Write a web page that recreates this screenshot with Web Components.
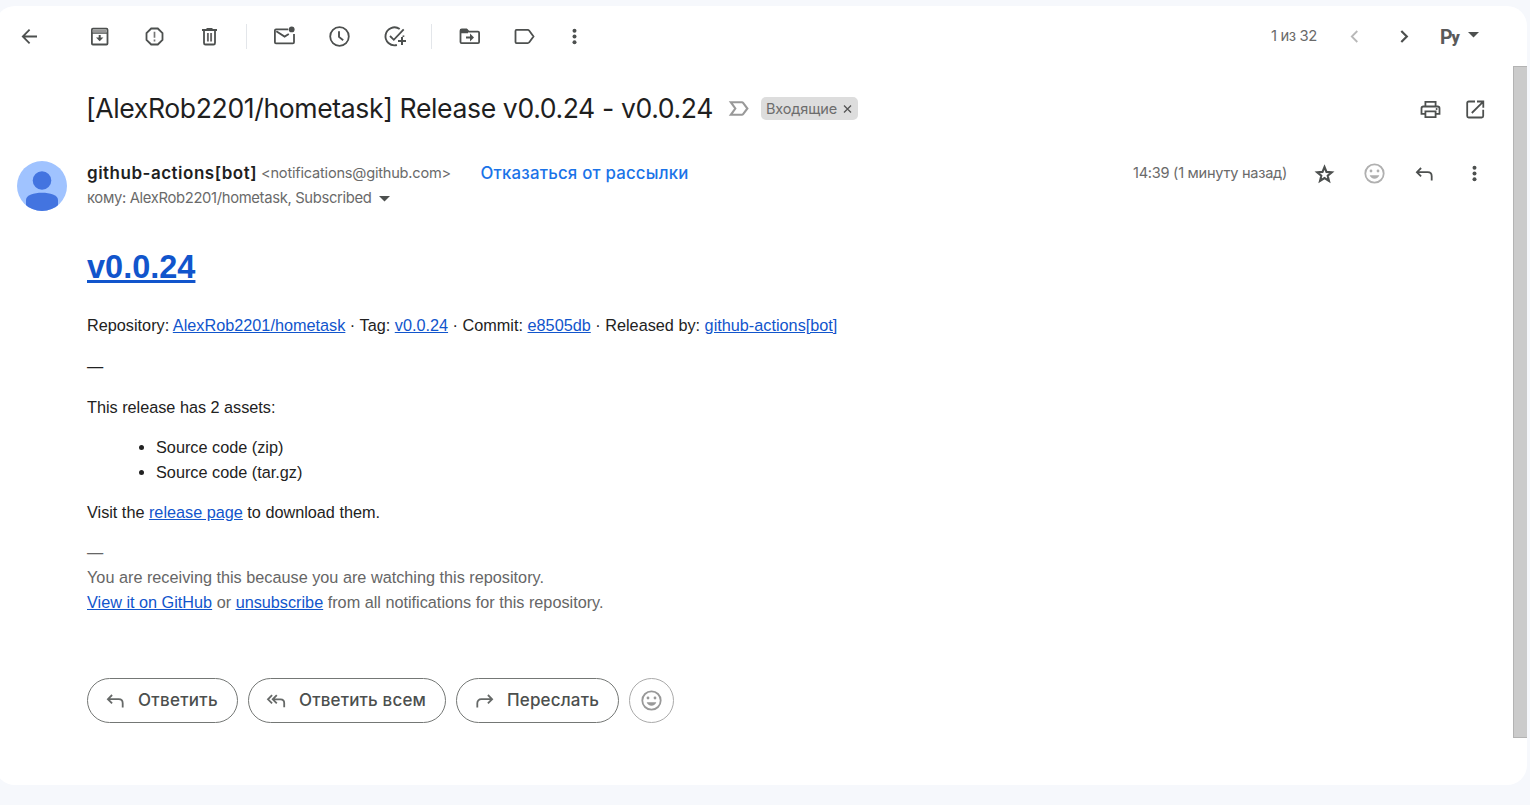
<!DOCTYPE html>
<html lang="ru">
<head>
<meta charset="utf-8">
<title>Release v0.0.24</title>
<style>
html,body{margin:0;height:100%;overflow:hidden;background:#f6f8fc}
body{font-family:Inter,"Open Sans",sans-serif;color:#1f1f1f}
</style>
</head>
<body>
<mail-app></mail-app>
<script>
const define=(name,html,setup)=>{
  const t=document.createElement('template');t.innerHTML=html;
  customElements.define(name,class extends HTMLElement{
    constructor(){super();this.attachShadow({mode:'open'}).append(t.content.cloneNode(true));}
    connectedCallback(){if(setup)setup(this,this.shadowRoot);}
  });
};

/* Line icons on a 25 unit grid */
const smile='<circle cx="12.5" cy="12.5" r="9.2"/><circle cx="9" cy="10" r="1.4" fill="currentColor" stroke="none"/><circle cx="16" cy="10" r="1.4" fill="currentColor" stroke="none"/><path d="M7.7 14.3h9.6c-.8 2.1-2.6 3.4-4.8 3.4s-4-1.300-4.800-3.400z" fill="currentColor" stroke="none"/>';
const ICONS={
back:'<path d="M20 12.500H6M12.600 5.700 5.800 12.500l6.800 6.800"/>',
archive:'<rect x="4.900" y="4.700" width="15.600" height="15.800" rx="1"/><path d="M5.800 7.300h13.800" stroke-width="2.600" stroke="#999"/><path d="M5 9.200h15.400" stroke-width="1.200"/><path d="M12.700 11v3.500" stroke-width="2"/><path d="M9 13.500h7.400l-3.700 3.700z" fill="currentColor" stroke="none"/>',
spam:'<path d="M9.200 4.500h6.600l4.700 4.700v6.600l-4.700 4.700H9.200l-4.700-4.700V9.200z"/><path d="M12.500 7.800v6M12.500 15.500v2" stroke-width="1.700" stroke="#777"/>',
trash:'<path d="M5 6h15M9.500 4.900h6" stroke-width="2"/><path d="M7 6.500v12.400c0 .9.600 1.600 1.500 1.600h8c.900 0 1.500-.7 1.500-1.600V6.500"/><path d="M10.900 9v8.500M14.100 9v8.500" stroke-width="1.900" stroke="#666"/>',
unread:'<path d="M16.300 5.300H4c-.6 0-1.100.5-1.100 1.100v11.900c0 .6.500 1.100 1.100 1.100h16.900c.6 0 1.100-.5 1.100-1.100V10"/><path d="m4.300 7.300 8.300 5.300 4.200-2.600"/><circle cx="19.700" cy="5.400" r="2.900" fill="currentColor" stroke="none"/>',
clock:'<circle cx="12.500" cy="12.500" r="9.300"/><path d="M12 7.200v5.700l4.200 3.300" stroke-width="1.900"/>',
task:'<path d="M17.700 5A9 9 0 1 0 14.900 21M21.300 11.500q.1.500 0 1.300" stroke-width="1.900"/><path d="m8 12 3.800 3.800L21.700 5.300"/><path d="M20 13v8M16 17h8" stroke-width="2"/>',
move:'<path d="M3.500 8V6.800c0-.9.500-1.300 1.300-1.300h4.700l2.200 2.200H21c.600 0 1.100.5 1.100 1.100v9.300c0 .6-.5 1.100-1.100 1.100H4.600c-.6 0-1.100-.5-1.100-1.100z"/><path d="M3.500 7.500h7.500" stroke-width="3.400"/><path d="M9 13.500h5" stroke-width="2"/><path d="M13 9.600l4 3.900-4 3.900z" fill="currentColor" stroke="none"/>',
label:'<path d="M4.500 5.900h11.300c.600 0 1 .2 1.300.7l4.400 5.900-4.400 5.900c-.3.500-.7.700-1.300.7H4.500c-.6 0-1-.4-1-1V6.900c0-.6.400-1 1-1z"/>',
more:'<g fill="currentColor" stroke="none"><circle cx="12.500" cy="6.800" r="2"/><circle cx="12.500" cy="12.500" r="2"/><circle cx="12.500" cy="18.200" r="2"/></g>',
prev:'<path d="m15.300 7-5.500 5.500 5.500 5.500"/>',
next:'<path d="m9.300 7 5.500 5.500-5.500 5.500" stroke-width="2.200"/>',
print:'<path d="M7.500 16.900H3.500V11.400c0-1.100.8-1.900 1.900-1.900h14.200c1.100 0 1.900.8 1.900 1.900v5.500h-4"/><path d="M7.400 9V4.800h10.200V9M7.400 14.300h10.200v5.900H7.400z"/><circle cx="18.600" cy="12" r="1" fill="currentColor" stroke="none"/>',
open:'<path d="M12 4.500H5.700c-.9 0-1.500.6-1.500 1.500v13c0 .9.600 1.500 1.500 1.500h13c.9 0 1.500-.6 1.500-1.500v-6.300M14 4.500h6.300v6.200M20 4.800 8.800 16"/>',
star:'<path d="m12.500 6 2 4.900 5.300.4-4.100 3.400 1.300 5.200-4.500-2.900L8 19.900l1.300-5.200-4.100-3.400 5.300-.4z" stroke-width="2.100"/>',
smile,
reply:'<path d="M9.100 7 4.900 11.200l4.200 4.200M5 11.200h10.700c2.400 0 4 1.600 4 4v4.300"/>',
replyall:'<path d="m8.100 7.200-4.100 4.100 4.100 4.100M12.800 7.200l-4.100 4.100 4.100 4.100M8.900 11.300h7.700c2.200 0 3.600 1.500 3.600 3.700v4.300"/>',
forward:'<path d="m15.900 7 4.200 4.200-4.200 4.200M20 11.200H9.300c-2.400 0-4 1.600-4 4v4.300"/>',
important:'<path d="M3.800 6.200h11.100c.5 0 .9.200 1.200.6l4.300 5.700-4.300 5.700c-.3.400-.7.600-1.200.6H3.800l4.500-6.300z" stroke-width="2.100"/>',
close:'<path d="m9 8.500 7 7M16 8.500l-7 7" stroke-width="1.300"/>',
caret:'<path d="M7 10h11l-5.500 5.500z" fill="currentColor" stroke="none"/>'
};
define('ui-icon',`<style>:host{display:block;flex:none;width:25px;height:25px;color:#4d504f}svg{display:block;width:25px;height:25px}</style>
<svg viewBox="0 0 25 25" fill="none" stroke="currentColor" stroke-width="1.800"></svg>`,
(h,r)=>{r.querySelector('svg').innerHTML=ICONS[h.getAttribute('name')];});

/* A label tracked so that its line takes a given width */
define('fit-text',`<style>:host{display:block;flex:none;white-space:pre}span{display:inline-block}</style><span><slot></slot></span>`,
(h,r)=>{
  const s=r.querySelector('span'),w=+h.getAttribute('width');
  h.style.width=w+'px';
  const n=r.querySelector('slot').assignedNodes({flatten:true}).reduce((a,x)=>a+x.textContent.length,0);
  if(n)s.style.letterSpacing=(w-s.getBoundingClientRect().width)/n+'px';
});

define('tool-bar',`<style>
:host{display:flex;align-items:center;height:60px;padding:0 46px 0 22px;box-sizing:border-box}
.group{display:flex;gap:30px}
.sep{width:1px;height:25px;background:#e3e6ea}
.back{margin-right:45px}
.count{font-size:14.800px;color:#6a6a6a;margin-left:auto}
.ime{display:flex;font:700 19.500px/25px Roboto,sans-serif;color:#5a5a5a;width:22px;margin-top:3px}
.ime small{font-size:16px;line-height:25px;font-weight:900;margin-left:-1px}
</style>
<ui-icon class="back" name="back"></ui-icon>
<div class="group"><ui-icon name="archive"></ui-icon><ui-icon name="spam"></ui-icon><ui-icon name="trash"></ui-icon></div>
<i class="sep" style="margin:0 25px 0 24px"></i>
<div class="group"><ui-icon name="unread"></ui-icon><ui-icon name="clock"></ui-icon><ui-icon name="task"></ui-icon></div>
<i class="sep" style="margin:0 25px 0 24px"></i>
<div class="group"><ui-icon name="move"></ui-icon><ui-icon name="label"></ui-icon><ui-icon name="more" style="margin-left:-5px"></ui-icon></div>
<fit-text class="count" width="46">1 из 32</fit-text>
<ui-icon name="prev" style="color:#b8b8b8;margin-left:25px"></ui-icon>
<ui-icon name="next" style="margin:0 22px 0 25px"></ui-icon>
<div class="ime" style="margin-left:1px;margin-right:-1px">Р<small>у</small></div>
<ui-icon name="caret" style="margin:-3px -5px 0 0"></ui-icon>`);

define('label-chip',`<style>:host{display:flex;align-items:center;height:23px;width:97px;box-sizing:border-box;padding-left:5px;background:#ddd;border-radius:5px;font-size:14.500px;color:#6c6c6c;flex:none}
fit-text{margin-top:-1px}
ui-icon{margin:1px 0 0 -2px;color:#555}</style><fit-text width="71"><slot></slot></fit-text><ui-icon name="close"></ui-icon>`);

define('subject-line',`<style>:host{display:flex;align-items:center;height:45px}
.t{font-size:26.600px;line-height:45px;color:#1f1f1f;margin-left:-1px}.sp{flex:1}
</style><fit-text class="t" width="627"><slot></slot></fit-text>
<ui-icon name="important" style="color:#999;margin:0 9px 0 14px"></ui-icon><label-chip>Входящие</label-chip>
<span class="sp"></span><ui-icon name="print" style="margin-top:1px"></ui-icon><ui-icon name="open" style="margin:1px -1px 0 20px"></ui-icon>`);

define('user-avatar',`<style>:host{display:block;width:50px;height:50px;flex:none}svg{display:block}</style>
<svg width="50" height="50" viewBox="0 0 50 50"><defs><clipPath id="c"><circle cx="25" cy="25" r="25"/></clipPath></defs><g clip-path="url(#c)"><path fill="#a0c3ff" d="M0 0h50v50H0z"/><circle cx="25" cy="19.500" r="9.300" fill="#4374e0"/><path fill="#4374e0" d="M9 39c0-5 8-7.300 16-7.300S41 34 41 39v11H9z"/></g></svg>`);

define('sender-info',`<style>
:host{display:flex;margin-left:-70px}
.who{margin-left:20px}.row{display:flex;height:25px;line-height:25px;align-items:center}
.name{font-size:17px;font-weight:600}
.mail{font-size:14.600px;color:#6a6a6a;margin:-1px 0 0 4px}
.unsub{font-size:16.800px;font-weight:500;color:#1a73e8;margin-left:29.500px}
.to{font-size:14.800px;color:#6a6a6a}
.acts{display:flex;align-items:center;height:25px;margin-left:auto;gap:25px}
.time{font-size:14.600px;color:#6a6a6a;margin-top:-1px}
</style>
<user-avatar></user-avatar>
<div class="who">
<div class="row"><fit-text class="name" width="170">github-actions[bot]</fit-text><fit-text class="mail" width="190">&lt;notifications@github.com&gt;</fit-text><fit-text class="unsub" width="208">Отказаться от рассылки</fit-text></div>
<div class="row"><fit-text class="to" width="284.500">кому: AlexRob2201/hometask, Subscribed</fit-text><ui-icon name="caret"></ui-icon></div>
</div>
<div class="acts"><fit-text class="time" width="154">14:39 (1 минуту назад)</fit-text><ui-icon name="star"></ui-icon><ui-icon name="smile" style="color:#b0b0b0"></ui-icon><ui-icon name="reply"></ui-icon><ui-icon name="more"></ui-icon></div>`);

define('mail-body',`<style>
:host{display:block;font:16.250px/25px "Liberation Sans",Arial,sans-serif;color:#222}
a{color:#1155cc;text-decoration:underline}
h1{margin:0 0 27px;font-size:32.500px;line-height:38px}
p{margin:0 0 16px}
ul{margin:0 0 15px;padding-left:69px}
.foot{color:#666}
</style>
<h1><a>v0.0.24</a></h1>
<p><fit-text width="750.400">Repository: <a>AlexRob2201/hometask</a> · Tag: <a>v0.0.24</a> · Commit: <a>e8505db</a> · Released by: <a>github-actions[bot]</a></fit-text></p>
<p>—</p>
<p style="margin-bottom:15px"><fit-text width="188.500">This release has 2 assets:</fit-text></p>
<ul><li>Source code (zip)</li><li>Source code (tar.gz)</li></ul>
<p style="margin-bottom:15px"><fit-text width="293">Visit the <a>release page</a> to download them.</fit-text></p>
<div class="foot">—<br><fit-text width="457">You are receiving this because you are watching this repository.</fit-text><fit-text width="516.500"><a>View it on GitHub</a> or <a>unsubscribe</a> from all notifications for this repository.</fit-text></div>`);

define('pill-button',`<style>
:host{display:flex;align-items:center;height:45px;box-sizing:border-box;border:1px solid #747775;border-radius:23px;font-size:17px;font-weight:500;color:#4c4f4e;padding-left:15px;flex:none}
ui-icon{color:#666968;margin-right:10px}
.l{margin-top:-1px}
:host([round]){width:45px;padding-left:9px;border-color:#aaa}
:host([round]) ui-icon{color:#999;margin:0}
</style><ui-icon></ui-icon><div class="l"><slot></slot></div>`,
(h,r)=>{const i=r.querySelector('ui-icon');i.setAttribute('name',h.getAttribute('icon'));i.shadowRoot.querySelector('svg').innerHTML=ICONS[h.getAttribute('icon')];});

define('reply-bar',`<style>:host{display:flex;gap:10px}</style>
<pill-button icon="reply" style="width:151px"><fit-text width="80">Ответить</fit-text></pill-button>
<pill-button icon="replyall" style="width:198px"><fit-text width="127">Ответить всем</fit-text></pill-button>
<pill-button icon="forward" style="width:163px"><fit-text width="92">Переслать</fit-text></pill-button>
<pill-button icon="smile" round></pill-button>`);

define('scroll-bar',`<style>:host{display:block;width:14px;box-sizing:border-box;background:#cbcbcb;border:1px solid #b3b3b3;border-right:0;flex:none}</style>`);

define('mail-app',`<style>
:host{display:block;height:805px;padding-top:6px;box-sizing:border-box}
.card{width:1532px;height:779px;margin-left:-5px;background:#fff;border-radius:20px;display:flex;flex-direction:column;overflow:hidden}
.scroll{display:flex;height:672px}
main{flex:1;padding:20px 26px 0 92px}
sender-info{margin-top:30px}mail-body{margin-top:37px}reply-bar{margin-top:63px}
</style>
<div class="card"><tool-bar></tool-bar><div class="scroll"><main>
<subject-line>[AlexRob2201/hometask] Release v0.0.24 - v0.0.24</subject-line>
<sender-info></sender-info><mail-body></mail-body><reply-bar></reply-bar>
</main><scroll-bar></scroll-bar></div></div>`);
</script>
</body>
</html>
